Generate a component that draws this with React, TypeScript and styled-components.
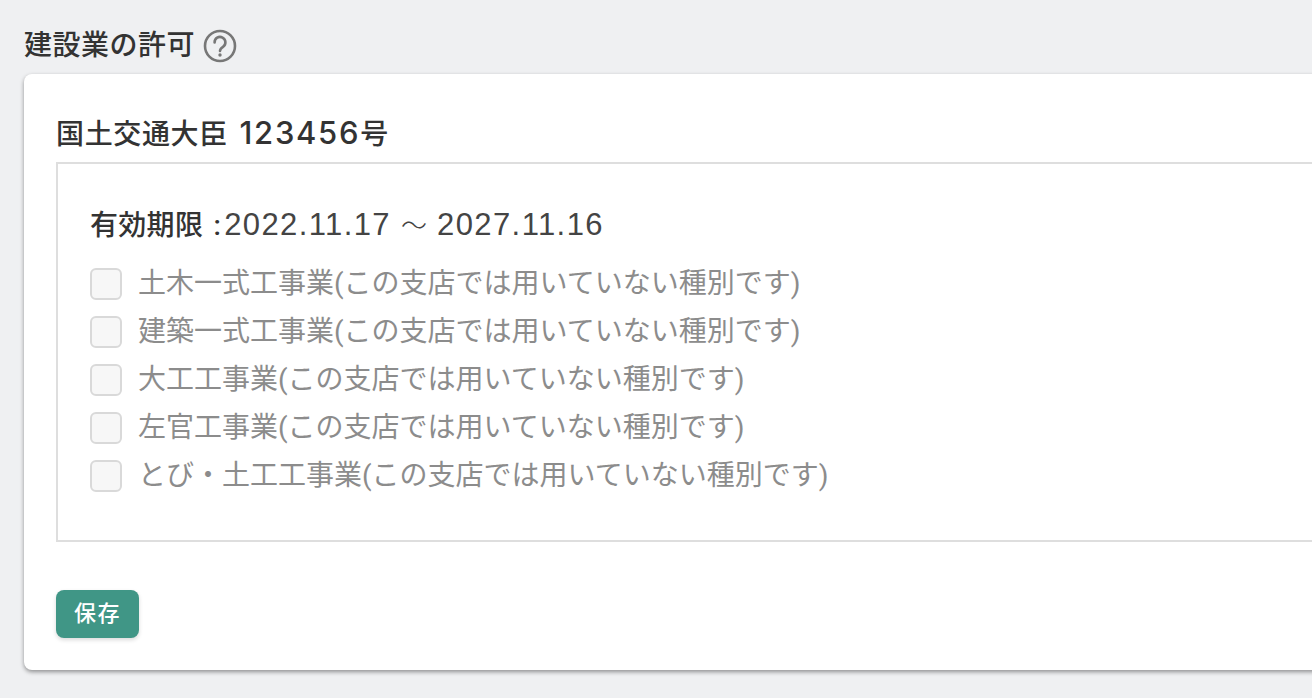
import React from "react";
import styled, { createGlobalStyle } from "styled-components";

const Global = createGlobalStyle`
  html, body { margin: 0; padding: 0; height: 100%; background: #eff0f2; overflow: hidden; }
  body { font-family: Roboto, "Noto Sans CJK JP", sans-serif; color: #333; }
`;
const Page = styled.div`
  width: 1500px;
  height: 698px;
  padding: 26px 0 0 24px;
  box-sizing: border-box;
`;
const Heading = styled.div`
  display: flex;
  align-items: center;
  gap: 8px;
  height: 40px;
  margin-bottom: 8px;
`;
const HeadingText = styled.h2`
  margin: 0;
  font-size: 28px;
  font-weight: 500;
  line-height: 46px;
  letter-spacing: 0.5px;
  color: #333;
`;
const Help = styled.svg`
  width: 34px;
  height: 34px;
  display: block;
`;
const Card = styled.section`
  width: 1440px;
  height: 596px;
  box-sizing: border-box;
  background: #fff;
  border-radius: 8px;
  padding: 40px 32px 32px;
  box-shadow: 0 2px 4px rgba(0, 0, 0, 0.4);
`;
const LicenseTitle = styled.h3`
  margin: 0 0 6px;
  font-size: 28px;
  line-height: 42px;
  font-weight: 500;
  color: #333;
  letter-spacing: 0.65px;
`;
const TitleNumber = styled.span`
  font-family: Inter, sans-serif;
  font-size: 31px;
  line-height: 1;
  font-weight: 500;
  letter-spacing: 1.7px;
  margin-left: 4px;
`;
const Panel = styled.div`
  height: 380px;
  box-sizing: border-box;
  border: 2px solid #dedede;
  padding: 40px 32px;
`;
const Period = styled.div`
  font-size: 28px;
  line-height: 44px;
  margin-bottom: 12px;
  color: #333;
`;
const PeriodLabel = styled.span`
  font-weight: 500;
  letter-spacing: 0.3px;
  word-spacing: 3px;
  margin-right: 3px;
`;
const PeriodDate = styled.span`
  font-family: "Liberation Sans", sans-serif;
  font-size: 31px;
  line-height: 1;
  letter-spacing: 1.4px;
  color: #444;
`;
const Wave = styled.span`
  font-family: "Noto Sans CJK JP", sans-serif;
  font-size: 26px;
  line-height: 1;
  font-weight: 300;
  letter-spacing: 0;
`;
const Row = styled.label`
  display: flex;
  align-items: center;
  height: 48px;
  gap: 16px;
`;
const Box = styled.span`
  width: 32px;
  height: 32px;
  box-sizing: border-box;
  border: 2px solid #d9d9d9;
  border-radius: 6px;
  background: #f7f7f7;
  flex: none;
`;
const RowText = styled.span`
  font-size: 28px;
  line-height: 40px;
  color: #8c8c8c;
`;
const Save = styled.button`
  display: block;
  margin-top: 48px;
  width: 83px;
  height: 48px;
  padding: 0;
  border: none;
  border-radius: 8px;
  background: #409686;
  color: #fff;
  font: 500 22px/48px Roboto, "Noto Sans CJK JP", sans-serif;
  letter-spacing: 1.4px;
  box-shadow: 0 2px 4px rgba(0, 0, 0, 0.15);
`;

const items = [
  "土木一式工事業(この支店では用いていない種別です)",
  "建築一式工事業(この支店では用いていない種別です)",
  "大工工事業(この支店では用いていない種別です)",
  "左官工事業(この支店では用いていない種別です)",
  "とび・土工工事業(この支店では用いていない種別です)",
];

export default function App() {
  return (
    <Page>
      <Global />
      <Heading>
        <HeadingText>建設業の許可</HeadingText>
        <Help viewBox="0 0 34 34" fill="none">
          <circle cx="17" cy="17" r="15" stroke="#777" strokeWidth="2.6" />
          <path d="M11.6 13.4a5.4 5.4 0 1 1 8.4 4.4c-1.9 1.3-3 2.2-3 4.2" stroke="#777" strokeWidth="2.6" strokeLinecap="round" />
          <circle cx="17" cy="26" r="1.7" fill="#777" />
        </Help>
      </Heading>
      <Card>
        <LicenseTitle>
          国土交通大臣 <TitleNumber>123456</TitleNumber>号
        </LicenseTitle>
        <Panel>
          <Period>
            <PeriodLabel>有効期限 :</PeriodLabel>
            <PeriodDate>
              2022.11.17 <Wave>〜</Wave> 2027.11.16
            </PeriodDate>
          </Period>
          {items.map((t) => (
            <Row key={t}>
              <Box />
              <RowText>{t}</RowText>
            </Row>
          ))}
        </Panel>
        <Save>保存</Save>
      </Card>
    </Page>
  );
}
